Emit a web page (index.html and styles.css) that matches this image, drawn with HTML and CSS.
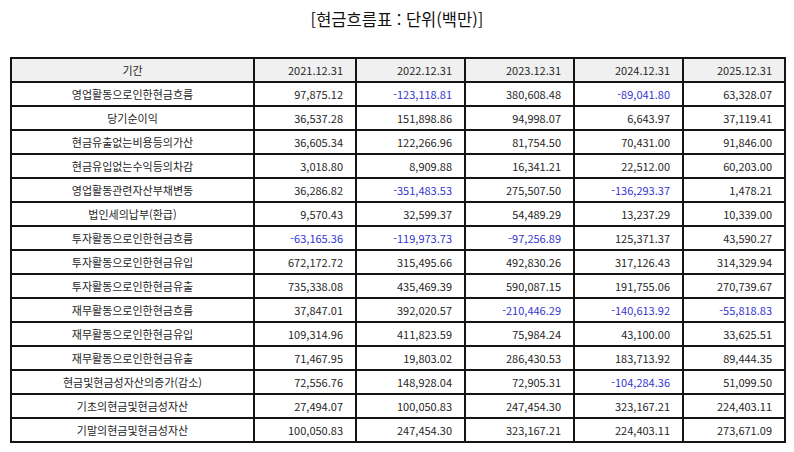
FILE: index.html
```html
<!DOCTYPE html>
<html lang="ko">
<head>
<meta charset="utf-8">
<title>현금흐름표</title>
<link rel="stylesheet" href="styles.css">
</head>
<body>
<div class="title">[현금흐름표 : 단위(백만)]</div>
<table class="cf">
<colgroup>
<col class="c-label"><col class="c-num1"><col class="c-num"><col class="c-num"><col class="c-num"><col class="c-num1">
</colgroup>
<thead>
<tr><th class="label">기간</th><th>2021.12.31</th><th>2022.12.31</th><th>2023.12.31</th><th>2024.12.31</th><th>2025.12.31</th></tr>
</thead>
<tbody>
<tr><td class="label">영업활동으로인한현금흐름</td><td>97,875.12</td><td class="neg">-123,118.81</td><td>380,608.48</td><td class="neg">-89,041.80</td><td>63,328.07</td></tr>
<tr><td class="label">당기순이익</td><td>36,537.28</td><td>151,898.86</td><td>94,998.07</td><td>6,643.97</td><td>37,119.41</td></tr>
<tr><td class="label">현금유출없는비용등의가산</td><td>36,605.34</td><td>122,266.96</td><td>81,754.50</td><td>70,431.00</td><td>91,846.00</td></tr>
<tr><td class="label">현금유입없는수익등의차감</td><td>3,018.80</td><td>8,909.88</td><td>16,341.21</td><td>22,512.00</td><td>60,203.00</td></tr>
<tr><td class="label">영업활동관련자산부채변동</td><td>36,286.82</td><td class="neg">-351,483.53</td><td>275,507.50</td><td class="neg">-136,293.37</td><td>1,478.21</td></tr>
<tr><td class="label">법인세의납부(환급)</td><td>9,570.43</td><td>32,599.37</td><td>54,489.29</td><td>13,237.29</td><td>10,339.00</td></tr>
<tr><td class="label">투자활동으로인한현금흐름</td><td class="neg">-63,165.36</td><td class="neg">-119,973.73</td><td class="neg">-97,256.89</td><td>125,371.37</td><td>43,590.27</td></tr>
<tr><td class="label">투자활동으로인한현금유입</td><td>672,172.72</td><td>315,495.66</td><td>492,830.26</td><td>317,126.43</td><td>314,329.94</td></tr>
<tr><td class="label">투자활동으로인한현금유출</td><td>735,338.08</td><td>435,469.39</td><td>590,087.15</td><td>191,755.06</td><td>270,739.67</td></tr>
<tr><td class="label">재무활동으로인한현금흐름</td><td>37,847.01</td><td>392,020.57</td><td class="neg">-210,446.29</td><td class="neg">-140,613.92</td><td class="neg">-55,818.83</td></tr>
<tr><td class="label">재무활동으로인한현금유입</td><td>109,314.96</td><td>411,823.59</td><td>75,984.24</td><td>43,100.00</td><td>33,625.51</td></tr>
<tr><td class="label">재무활동으로인한현금유출</td><td>71,467.95</td><td>19,803.02</td><td>286,430.53</td><td>183,713.92</td><td>89,444.35</td></tr>
<tr><td class="label">현금및현금성자산의증가(감소)</td><td>72,556.76</td><td>148,928.04</td><td>72,905.31</td><td class="neg">-104,284.36</td><td>51,099.50</td></tr>
<tr><td class="label">기초의현금및현금성자산</td><td>27,494.07</td><td>100,050.83</td><td>247,454.30</td><td>323,167.21</td><td>224,403.11</td></tr>
<tr><td class="label">기말의현금및현금성자산</td><td>100,050.83</td><td>247,454.30</td><td>323,167.21</td><td>224,403.11</td><td>273,671.09</td></tr>
</tbody>
</table>
</body>
</html>
```

FILE: styles.css
```css
html, body {
  margin: 0;
  padding: 0;
  background: #ffffff;
}
body {
  font-family: "Noto Sans CJK KR", "Noto Sans", sans-serif;
  color: #262626;
}
.title {
  text-align: center;
  font-size: 16.5px;
  line-height: 20px;
  padding-top: 9px;
  height: 57px;
  box-sizing: border-box;
  color: #111111;
}
.cf {
  border-collapse: collapse;
  width: 776px;
  margin-left: 10px;
  table-layout: fixed;
  font-size: 11px;
}
.c-label { width: 243px; }
.c-num1 { width: 102px; }
.c-num { width: 109px; }
.cf tr { height: 24px; }
.cf th, .cf td {
  border: 2px solid #141414;
  padding: 0 12px 0 4px;
  text-align: right;
  font-weight: normal;
  line-height: 14px;
  white-space: nowrap;
}
.cf thead th {
  background: #f0f0f0;
}
.cf .label {
  text-align: center;
  padding: 0 4px;
}
.cf .neg {
  color: #3535d0;
}
```
